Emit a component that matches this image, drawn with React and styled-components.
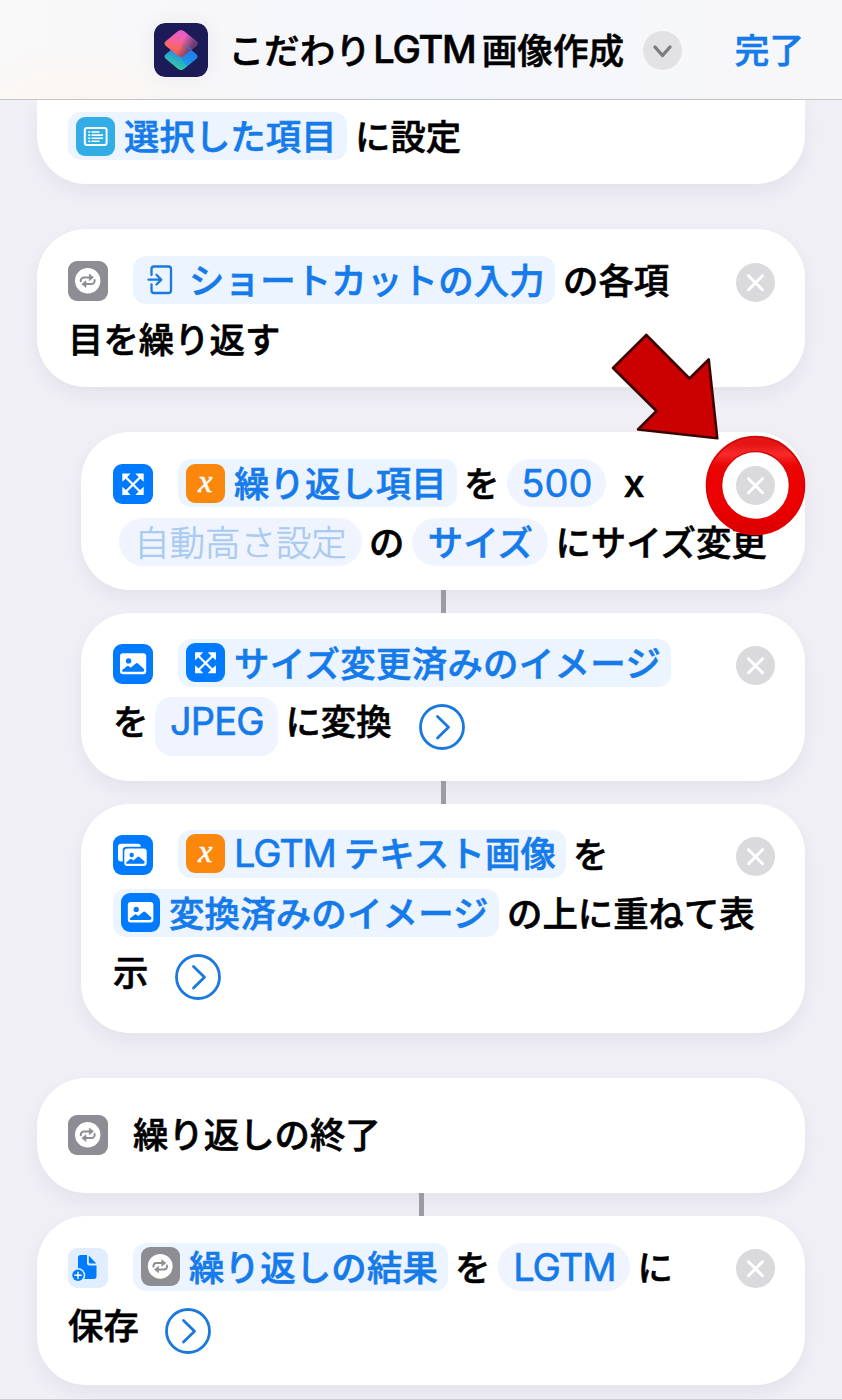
import React from "react";
import styled, { createGlobalStyle, css } from "styled-components";

const GlobalStyle = createGlobalStyle`
  * { box-sizing: border-box; }
  html, body { margin: 0; padding: 0; background: #f0eff6; }
  body { width: 842px; height: 1400px; overflow: hidden; }
`;

const Screen = styled.div`
  position: relative;
  width: 842px;
  height: 1400px;
  overflow: hidden;
  background: #f0eff6;
  color: #000;
  font-family: "Noto Sans CJK JP", sans-serif;
  font-size: 35.4px;
  font-weight: 500;
  line-height: 45px;
  white-space: nowrap;
  -webkit-text-stroke: 0.6px currentColor;
`;

const Header = styled.header`
  display: flex;
  align-items: center;
  height: 100px;
  padding: 0 38px 0 154px;
  border-bottom: 1px solid #c5c5cc;
  background:
    radial-gradient(150px 60px at 80px 100px, rgba(253, 246, 238, 0.8), rgba(253, 246, 238, 0)),
    linear-gradient(90deg, #f9f9fa 0%, #f7f7f9 25%, #f4f7fd 50%, #f6f7fa 75%, #f7f7f9 100%);
`;

const AppIcon = styled.svg`
  flex: none;
  width: 54px;
  height: 54px;
  border-radius: 11px;
  box-shadow: 0 0 24px rgba(40, 40, 90, 0.06);
`;

const Title = styled.h1`
  display: flex;
  align-items: center;
  width: 395px;
  margin: 0 0 0 20.5px;
  padding-bottom: 3px;
  font-size: 35.6px;
  font-weight: 500;
  line-height: 45px;
`;

const MenuButton = styled.button`
  display: flex;
  flex: none;
  width: 39px;
  height: 39px;
  margin: 1px 0 0 19.5px;
  padding: 0;
  border: 0;
  border-radius: 50%;
  background: #e2e2e5;
`;

const Done = styled.span`
  margin-left: auto;
  padding-bottom: 3px;
  font-size: 34.6px;
  color: #157aea;
`;

const Flow = styled.main`
  display: flex;
  flex-direction: column;
  padding: 0 37px;
`;

const Card = styled.section`
  flex: none;
  height: ${(p) => p.$h}px;
  margin-top: ${(p) => p.$gap || 0}px;
  margin-left: ${(p) => (p.$nested ? 44 : 0)}px;
  padding: ${(p) => (p.$pad === undefined ? 21.5 : p.$pad)}px 30px 0 ${(p) => (p.$nested ? 32 : 31)}px;
  border-radius: ${(p) => (p.$cut ? "0 0 49px 49px" : "49px")};
  background: #fff;
  box-shadow: 0 8px 18px rgba(40, 35, 70, 0.06);
`;

const Connector = styled.div`
  flex: none;
  align-self: center;
  width: 5px;
  height: ${(p) => p.$h}px;
  margin-left: ${(p) => (p.$nested ? 44 : 0)}px;
  background: #9b9aa5;
  position: relative;
`;

const Row = styled.div`
  display: flex;
  align-items: center;
  height: 59px;
`;

const Lead = styled.div`
  flex: none;
  width: 40px;
  height: 40px;
  margin: 2px 25px 0 0;
`;

const Tile = styled.span`
  display: flex;
  flex: none;
  align-items: center;
  justify-content: center;
  width: ${(p) => p.$size || 39}px;
  height: ${(p) => p.$size || 39}px;
  border-radius: 9px;
  background: ${(p) => p.$bg};
  svg { display: block; width: 100%; height: 100%; }
`;

const MathX = styled.i`
  font: italic 400 32px/30px "Liberation Serif", serif;
  color: #fff;
  padding-bottom: 5px;
`;

const Variable = styled.span`
  display: flex;
  flex: none;
  align-items: center;
  width: ${(p) => p.$w}px;
  height: 48px;
  padding-left: 8px;
  gap: 9px;
  border-radius: 13px;
  background: #ebf4ff;
  color: #157aea;
  letter-spacing: ${(p) => p.$track || 0.2}px;
`;

const Label = styled.span`
  padding-bottom: 3px;
`;

const Pill = styled.span`
  display: flex;
  flex: none;
  justify-content: center;
  width: ${(p) => p.$w}px;
  height: ${(p) => (p.$tall ? 59 : 48)}px;
  margin: ${(p) => (p.$tall ? 10 : 0)}px 0 0 ${(p) => p.$before || 0}px;
  border-radius: ${(p) => (p.$tall ? 17 : 24)}px;
  background: #f0f4ff;
  color: #157aea;
  ${(p) => p.$placeholder && css`
    color: #a9cbf1;
    font-weight: 300;
  `}
`;

const Words = styled.span`
  flex: none;
  margin-left: ${(p) => p.$before || 0}px;
  padding-bottom: ${(p) => p.$lift || 3}px;
`;

const Latin = styled.span`
  font-family: Inter, sans-serif;
  font-size: 38px;
  line-height: ${(p) => (p.$inPill ? 48 : 45)}px;
  font-weight: ${(p) => p.$weight || 400};
  letter-spacing: ${(p) => p.$track || 0}px;
  margin: 0 ${(p) => p.$after || 0}px 0 ${(p) => p.$before || 0}px;
  padding-top: ${(p) => p.$drop || 0}px;
`;

const Remove = styled.button`
  display: flex;
  flex: none;
  width: 39px;
  height: 39px;
  margin: ${(p) => p.$drop || 4}px 0 0 auto;
  padding: 0;
  border: 0;
  border-radius: 50%;
  background: #dadadd;
`;

const More = styled.button`
  display: flex;
  flex: none;
  width: 46px;
  height: 46px;
  margin: 10px 0 0 ${(p) => p.$before || 27}px;
  padding: 0;
  border: 0;
  background: none;
`;

const BottomEdge = styled.div`
  height: 1px;
  margin: 14px -37px 0;
  background: #cfced5;
`;

const Annotation = styled.svg`
  position: absolute;
  left: 600px;
  top: 325px;
  width: 215px;
  height: 220px;
`;

const RemoveButton = ({ drop }) => (
  <Remove $drop={drop}>
    <svg width="39" height="39" viewBox="0 0 39 39" stroke="#fff" strokeWidth="3" strokeLinecap="round">
      <path d="M12.5 12.7 26.5 26.7M26.5 12.7 12.5 26.7" />
    </svg>
  </Remove>
);

const MoreButton = ({ before }) => (
  <More $before={before}>
    <svg width="46" height="46" viewBox="0 0 46 46" fill="none" stroke="#1b78dc" strokeWidth="2.8" strokeLinecap="round" strokeLinejoin="round">
      <circle cx="23" cy="23" r="21.5" />
      <path d="M18.5 12.5 29.5 23.2 18.5 34" />
    </svg>
  </More>
);

const RepeatTile = ({ size }) => (
  <Tile $bg="#8e8d93" $size={size}>
    <svg viewBox="0 0 40 40" fill="none">
      <circle cx="19.7" cy="19.8" r="12.7" fill="#fff" />
      <path d="M12.8 20.2V19.6a3.2 3.2 0 0 1 3.2-3.2h6.5M26.6 19v.9a3.2 3.2 0 0 1-3.2 3.2h-6.5" stroke="#8e8d93" strokeWidth="2" strokeLinecap="round" />
      <path d="M21.3 13v6.8l4.2-3.4zM18 19.7v6.8l-4.2-3.4z" fill="#8e8d93" stroke="#8e8d93" strokeWidth=".6" strokeLinejoin="round" />
    </svg>
  </Tile>
);

const ListTile = () => (
  <Tile $bg="#32ade6">
    <svg viewBox="0 0 39 39" fill="none" stroke="#fff">
      <rect x="8.8" y="11" width="21.8" height="17" rx="2.2" strokeWidth="2" />
      <path d="M12.2 15h2M12.2 18.1h2M12.2 21.2h2M12.2 24.3h2M15.5 15h8M15.5 18.1h11.5M15.5 21.2h11.5M15.5 24.3h8" strokeWidth="1.6" />
    </svg>
  </Tile>
);

const ResizeTile = ({ size }) => (
  <Tile $bg="#007aff" $size={size}>
    <svg viewBox="0 0 40 40" fill="none" stroke="#fff" strokeWidth="2.3">
      <path d="M12 12.5 28 28.5M28 12.5 12 28.5" />
      <path d="M9.3 9.5h8.4l-2.4 2.5-3.2 3.2-2.8 2.6zM30.7 9.5h-8.4l2.4 2.5 3.2 3.2 2.8 2.6zM9.3 31h8.4l-2.4-2.5-3.2-3.2-2.8-2.6zM30.7 31h-8.4l2.4-2.5 3.2-3.2 2.8-2.6z" fill="#fff" stroke="none" />
    </svg>
  </Tile>
);

const PhotoTile = ({ size }) => (
  <Tile $bg="#007aff" $size={size}>
    <svg viewBox="0 0 40 40" fill="none">
      <rect x="7" y="9.2" width="26.2" height="21" rx="3" fill="#fff" />
      <circle cx="15.6" cy="16.9" r="2.7" fill="#007aff" />
      <path d="M9.2 27.5v-1.4l4.7-3.9q1-.8 2 0l1.8 1.5 5-4.3q1.1-.9 2.2 0l6.3 5.8v1q0 1.5-1.6 1.5H10.8q-1.6 0-1.6-.2z" fill="#007aff" />
    </svg>
  </Tile>
);

const PhotoStackTile = () => (
  <Tile $bg="#007aff" $size={40}>
    <svg viewBox="0 0 40 40" fill="none">
      <path d="M8.3 26.5Q5 26.5 5 23.6V11.7Q5 8.7 8.3 8.7H24.7Q27.8 8.7 27.8 11.8H13.5Q9.700 11.8 9.700 15.5V26.5z" fill="#fff" />
      <rect x="11.3" y="13.4" width="22.4" height="17.6" rx="3" fill="#fff" />
      <circle cx="18.7" cy="20" r="2.2" fill="#007aff" />
      <path d="M13.2 28.7v-1.2l3.7-3.2q1-.8 2 0l1.5 1.2 4-3.6q1-.8 2 0l5.2 4.7v1.1q0 1-1.2 1z" fill="#007aff" />
    </svg>
  </Tile>
);

const SaveTile = () => (
  <Tile $bg="#e1eeff" $size={40}>
    <svg viewBox="0 0 40 40" fill="none">
      <path d="M12.7 7h6.3v8q0 2.500 2.500 2.500H28.500v10.800q0 2.700-2.700 2.700H12.700q-2.700 0-2.700-2.700V9.700Q10 7 12.700 7z" fill="#007aff" />
      <path d="M20.800 7.500 28.300 15.600h-6q-1.500 0-1.500-1.500z" fill="#007aff" />
      <circle cx="10" cy="27.300" r="7.300" fill="#e1eeff" />
      <circle cx="10" cy="27.300" r="5.700" fill="#007aff" />
      <path d="M10 24.100v6.400M6.800 27.300h6.400" stroke="#fff" strokeWidth="1.400" strokeLinecap="round" />
    </svg>
  </Tile>
);

const VariableTile = () => (
  <Tile $bg="#fb870d"><MathX>x</MathX></Tile>
);

const InputGlyph = () => (
  <svg width="39" height="39" viewBox="0 0 39 39" fill="none" stroke="#1b78dc" strokeWidth="2.3" strokeLinecap="round" strokeLinejoin="round">
    <path d="M10.5 14V8q0-2.5 2.5-2.5h14.500Q30 5.500 30 8v21.500q0 2.500-2.500 2.500H13q-2.500 0-2.500-2.500v-6" />
    <path d="M7.500 18.700h12.500M15.500 13.800 20.300 18.700 15.500 23.500" />
  </svg>
);

export default function App() {
  return (
    <Screen>
      <GlobalStyle />
      <Header>
        <AppIcon viewBox="0 0 54 54">
          <defs>
            <linearGradient id="pink" x1="0.6" y1="0" x2="0.35" y2="1">
              <stop offset="0" stopColor="#e35bd6" />
              <stop offset="0.35" stopColor="#f062a8" />
              <stop offset="0.7" stopColor="#fb6660" />
              <stop offset="1" stopColor="#ee5360" />
            </linearGradient>
            <linearGradient id="shade" x1="0.3" y1="0" x2="1" y2="0.3">
              <stop offset="0.5" stopColor="#5a3a70" stopOpacity="0" />
              <stop offset="1" stopColor="#5a3a70" stopOpacity="0.95" />
            </linearGradient>
            <linearGradient id="sea" x1="0.85" y1="0.1" x2="0.35" y2="1">
              <stop offset="0" stopColor="#1777f2" />
              <stop offset="0.45" stopColor="#2490e2" />
              <stop offset="1" stopColor="#35d59a" />
            </linearGradient>
          </defs>
          <rect width="54" height="54" rx="11" fill="#1d1b57" />
          <path d="M23.500 21.500 12 31Q9 33.500 12 36L23.500 45.500Q27 48.500 30.500 45.500L42 36Q45 33.500 42 31L30.500 21.500Q27 18.500 23.500 21.500z" fill="url(#sea)" />
          <path d="M23.500 8.500 12 18Q9 20.500 12 23L23.500 32.500Q27 35.500 30.500 32.500L42 23Q45 20.500 42 18L30.500 8.500Q27 5.500 23.500 8.500z" fill="url(#pink)" />
          <path d="M23.500 8.500 12 18Q9 20.500 12 23L23.500 32.500Q27 35.500 30.500 32.500L42 23Q45 20.500 42 18L30.500 8.500Q27 5.500 23.500 8.500z" fill="url(#shade)" />
          <path d="M35.500 25.700 42 31Q45 33.500 42 36L33 43.500 27 34.500Q29 34 30.500 32.500L37 27z" fill="#1881f5" opacity="0.5" />
          <path d="M34.500 26.500 29.500 22.500Q36 24 38.500 26z" fill="#2f78e8" opacity="0.7" />
        </AppIcon>
        <Title>
          こだわり
          <Latin $weight={500} $track={-1.3} $before={2.5} $after={6.5} $drop={2}>LGTM</Latin>
          画像作成
        </Title>
        <MenuButton>
          <svg width="39" height="39" viewBox="0 0 39 39" fill="none" stroke="#7b7b80" strokeWidth="3.4" strokeLinecap="round" strokeLinejoin="round">
            <path d="M12 16 19.5 24.5 27 16" />
          </svg>
        </MenuButton>
        <Done>完了</Done>
      </Header>

      <Flow>
        <Card $h={83.5} $pad={6.5} $cut>
          <Row>
            <Variable $w={279} $track={0.05}><ListTile /><Label>選択した項目</Label></Variable>
            <Words $before={8}>に設定</Words>
          </Row>
        </Card>

        <Card $h={157.5} $gap={45.5}>
          <Row>
            <Lead><RepeatTile size={40} /></Lead>
            <Variable $w={422}><InputGlyph /><Label>ショートカットの入力</Label></Variable>
            <Words $before={8}>の各項</Words>
            <RemoveButton />
          </Row>
          <Row><Words>目を繰り返す</Words></Row>
        </Card>

        <Card $nested $h={158} $gap={45.5}>
          <Row>
            <Lead><ResizeTile size={40} /></Lead>
            <Variable $w={279} $track={0.05}><VariableTile /><Label>繰り返し項目</Label></Variable>
            <Words $before={7}>を</Words>
            <Pill $w={99} $before={8}><Latin $inPill>500</Latin></Pill>
            <Latin $weight={500} $before={17} $track={-1}>x</Latin>
            <RemoveButton />
          </Row>
          <Row>
            <Pill $w={243} $before={6} $placeholder>自動高さ設定</Pill>
            <Words $before={7}>の</Words>
            <Pill $w={136} $before={8}>サイズ</Pill>
            <Words $before={7}>にサイズ変更</Words>
          </Row>
        </Card>
        <Connector $nested $h={22.5} />
        <Card $nested $h={168.5} $pad={20.5}>
          <Row>
            <Lead><PhotoTile size={40} /></Lead>
            <Variable $w={493} $track={0.35}><ResizeTile /><Label>サイズ変更済みのイメージ</Label></Variable>
            <RemoveButton drop={6} />
          </Row>
          <Row>
            <Words $lift={5}>を</Words>
            <Pill $w={123} $before={7} $tall><Latin $inPill $track={-0.8}>JPEG</Latin></Pill>
            <Words $before={7} $lift={5}>に変換</Words>
            <MoreButton />
          </Row>
        </Card>
        <Connector $nested $h={22.5} />
        <Card $nested $h={229.5} $pad={20.5}>
          <Row>
            <Lead><PhotoStackTile /></Lead>
            <Variable $w={388}>
              <VariableTile />
              <Label><Latin $track={-1.2} $after={8}>LGTM</Latin>テキスト画像</Label>
            </Variable>
            <Words $before={7}>を</Words>
            <RemoveButton drop={6} />
          </Row>
          <Row>
            <Variable $w={386}><PhotoTile /><Label>変換済みのイメージ</Label></Variable>
            <Words $before={8}>の上に重ねて表</Words>
          </Row>
          <Row>
            <Words>示</Words>
            <MoreButton />
          </Row>
        </Card>

        <Card $h={115} $gap={45} $pad={26.5}>
          <Row>
            <Lead><RepeatTile size={40} /></Lead>
            <Words>繰り返しの終了</Words>
          </Row>
        </Card>
        <Connector $h={23} />
        <Card $h={169} $pad={21}>
          <Row>
            <Lead><SaveTile /></Lead>
            <Variable $w={315}><RepeatTile /><Label>繰り返しの結果</Label></Variable>
            <Words $before={7}>を</Words>
            <Pill $w={132} $before={8}><Latin $inPill $track={-1}>LGTM</Latin></Pill>
            <Words $before={7}>に</Words>
            <RemoveButton />
          </Row>
          <Row>
            <Words $lift={4}>保存</Words>
            <MoreButton before={26} />
          </Row>
        </Card>
        <BottomEdge />
      </Flow>

      <Annotation viewBox="600 325 215 220">
        <defs>
          <linearGradient id="ring" x1="0" y1="0" x2="0" y2="1">
            <stop offset="0" stopColor="#e51515" />
            <stop offset="0.12" stopColor="#fb2a2a" />
            <stop offset="0.26" stopColor="#ea0404" />
            <stop offset="0.75" stopColor="#ec0000" />
            <stop offset="1" stopColor="#de0000" />
          </linearGradient>
          <linearGradient id="rim" x1="0" y1="0" x2="0" y2="1">
            <stop offset="0" stopColor="#cc0a0a" />
            <stop offset="0.35" stopColor="#dc0202" />
            <stop offset="1" stopColor="#e40000" />
          </linearGradient>
        </defs>
        <path d="M646.3 335 689.5 378.5 708.7 359.5 717.3 438.3 638 429.5 656.5 411 613 368z" fill="#cb0000" stroke="#3d0000" strokeWidth="2.6" strokeLinejoin="round" />
        <circle cx="755.5" cy="485.5" r="41.5" fill="none" stroke="url(#rim)" strokeWidth="16.6" />
        <circle cx="755.5" cy="485.5" r="41.2" fill="none" stroke="url(#ring)" strokeWidth="13.5" />
      </Annotation>
    </Screen>
  );
}
